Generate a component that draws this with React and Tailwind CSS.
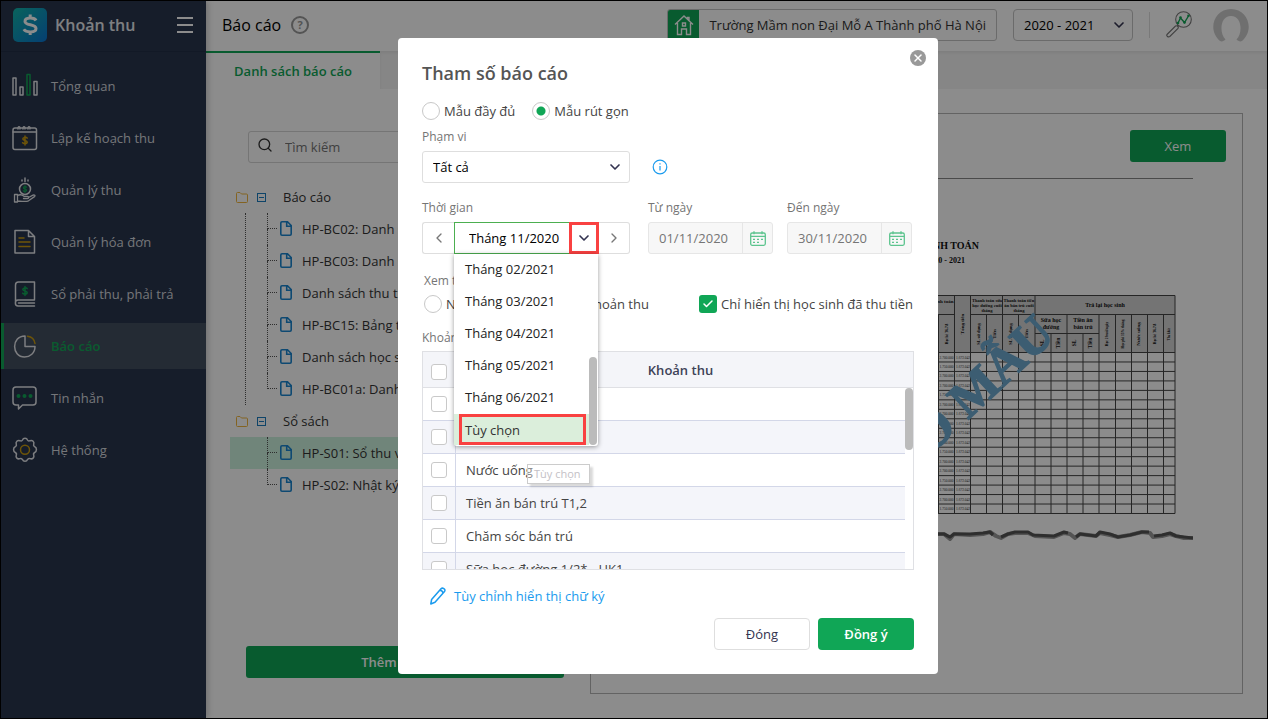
import React from "react";
import { ChevronDown, ChevronLeft, ChevronRight, Check, X, Search } from "lucide-react";

const stroke = { fill: "none", strokeWidth: 1.5, strokeLinecap: "round", strokeLinejoin: "round" };
const W = "#e4e6ea";
const G = "#12a656";
const Y = "#c79a10";

function Glyph({ children }) {
  return (
    <svg viewBox="0 0 26 26" className="size-[26px] shrink-0" {...stroke} stroke={W} aria-hidden="true">
      {children}
    </svg>
  );
}

const dollar = "M2.2-2.4C1.6-3.4-2.2-3.6-2.2-1.4C-2.2.4 2.2-.4 2.2 1.5C2.2 3.6-1.8 3.4-2.4 2.2M0-4.6V4.6";

const icons = {
  overview: (
    <>
      <rect x="1" y="5" width="3" height="17" />
      <rect x="8" y="14" width="3" height="8" />
      <rect x="15" y="1.5" width="3" height="20.5" stroke={G} />
      <rect x="22" y="8.5" width="3" height="13.5" />
    </>
  ),
  plan: (
    <>
      <rect x="1" y="3" width="23.5" height="21.5" rx="2" />
      <path d="M1 7h23.500M6 4.200c-.500-3.500 2.500-3.500 2-.200M11 4.200c-.500-3.500 2.500-3.500 2-.200M16 4.200c-.500-3.500 2.500-3.500 2-.200" strokeWidth="1.3" />
      <path d={dollar} transform="translate(13 15.5)" stroke={Y} />
    </>
  ),
  collect: (
    <>
      <circle cx="13" cy="12" r="5.5" />
      <path d={dollar} transform="translate(13 12) scale(.75)" stroke={G} />
      <path d="M10 4V3M13 4.500V1M16 4V3" />
      <path d="M2.500 17.500h3v7.500h-3zM5.500 18.500c3-1.500 5-.500 6.500.800h3.500c1.500 0 1.500 2.200 0 2.200h-4M16.500 20.500l4.500-2.300c1.500-.600 2.700.400 1.500 1.400l-6 4.200c-3 1.400-6 .200-11 .200" strokeWidth="1.3" />
    </>
  ),
  invoice: (
    <>
      <path d="M3 1.500h13.500l6 6v16.500h-19.500zM16.500 1.500v6h6" />
      <path d="M7 9h5M7 13h11M7 17.500h11" stroke={Y} />
    </>
  ),
  ledger: (
    <>
      <path d="M22.500 18.500v-17.500h-16c-2 0-3 1-3 3v18M22.500 19h-16.500c-3.500 0-3.500 6 0 6h16.500M6.500 22h16" />
      <path d={dollar} transform="translate(13 10)" stroke={G} />
    </>
  ),
  report: (
    <>
      <path d="M13 3C-1 3-.500 24 12.500 24C18 24 23 20 23 13.500H13z" />
      <path d="M15.500 3.200c4.500.600 7 3.500 7.500 7.300" stroke={Y} />
    </>
  ),
  message: (
    <>
      <path d="M4 2h17c2 0 3 1 3 3v12c0 2-1 3-3 3h-10.500l-4 4v-4h-2.500c-2 0-3-1-3-3v-12c0-2 1-3 3-3z" />
      <g fill={G} stroke="none">
        <circle cx="6.500" cy="11" r="2" />
        <circle cx="12.500" cy="11" r="2" />
        <circle cx="18.500" cy="11" r="2" />
      </g>
    </>
  ),
  system: (
    <>
      <path d="M10.500 3c.800-2.400 4.200-2.400 5 0c.500 1 1.500 1.200 2.500.700c2.500-1 4.600 1.100 3.700 3.500c-.400 1.100 0 2 1 2.500c2.300 1 2.300 4.800 0 5.800c-1 .500-1.400 1.500-1 2.500c.900 2.500-1.200 4.600-3.700 3.600c-1-.400-2 0-2.500 1c-.800 2.300-4.200 2.300-5 0c-.500-1-1.500-1.400-2.500-1c-2.500 1-4.600-1.100-3.700-3.600c.400-1 0-2-1-2.500c-2.300-1-2.300-4.800 0-5.800c1-.500 1.400-1.400 1-2.500c-.900-2.400 1.200-4.500 3.700-3.500c1 .500 2 .300 2.500-.700z" />
      <circle cx="13" cy="12.700" r="4.500" stroke={Y} />
    </>
  ),
};

const menu = [
  ["overview", "Tổng quan"],
  ["plan", "Lập kế hoạch thu"],
  ["collect", "Quản lý thu"],
  ["invoice", "Quản lý hóa đơn"],
  ["ledger", "Sổ phải thu, phải trả"],
  ["report", "Báo cáo"],
  ["message", "Tin nhắn"],
  ["system", "Hệ thống"],
];

function Sidebar() {
  return (
    <aside className="relative z-10 flex w-[205px] shrink-0 flex-col bg-[#28354e] shadow-[2px_0_6px_rgba(0,0,0,0.2)]">
      <div className="flex h-[51px] items-center border-b border-[#222e45] pr-[13px] pb-[3px] pl-3">
        <svg viewBox="0 0 34 34" className="size-[34px]" aria-hidden="true">
          <defs>
            <linearGradient id="brand" x1="0" y1="0" x2="1" y2="1">
              <stop offset="0" stopColor="#12b5a8" />
              <stop offset="1" stopColor="#0a74d0" />
            </linearGradient>
          </defs>
          <rect width="34" height="34" rx="5" fill="url(#brand)" />
          <path d="M23 12.500c-1.500-3.200-11-3.600-11 1c0 4.300 11 2.300 11 7c0 4.600-10 4.200-12.200.800M17.200 6.500v4M17.200 23v4" fill="none" stroke="#fff" strokeWidth="3" />
        </svg>
        <span className="ml-2 text-base font-semibold text-[#e6e8ec]">Khoản thu</span>
        <button type="button" aria-label="Menu" className="ml-auto flex w-4 flex-col gap-[5px]">
          <span className="h-[2px] w-full bg-white" />
          <span className="h-[2px] w-full bg-white" />
          <span className="h-[2px] w-full bg-white" />
        </button>
      </div>
      <nav className="mt-[11px] flex flex-col gap-[6px]">
        {menu.map(([key, label]) => (
          <a
            key={key}
            href="#"
            className={
              key === "report"
                ? "flex h-[46px] items-center gap-3 border-l-[3px] border-[#12a656] bg-[#434f60] pl-2 font-semibold text-[#12a656]"
                : "flex h-[46px] items-center gap-3 border-l-[3px] border-transparent pl-2 text-[#d6d8dc]"
            }
          >
            <Glyph>{icons[key]}</Glyph>
            <span className="pl-px">{label}</span>
          </a>
        ))}
      </nav>
    </aside>
  );
}

function Header() {
  return (
    <header className="relative z-[1] flex h-[50px] shrink-0 items-center bg-white pr-[18px] pb-[2px] pl-4 shadow-[0_2px_4px_rgba(0,0,0,0.08)]">
      <h1 className="text-base text-black">Báo cáo</h1>
      <button type="button" aria-label="Trợ giúp" className="ml-[10px] flex size-[18px] items-center justify-center rounded-full border-2 border-[#999] text-[11px] font-bold text-[#999]">
        ?
      </button>
      <div className="ml-auto flex h-8 items-center overflow-hidden rounded-[3px] border border-[#c4c4c4]">
        <span className="flex h-8 w-[31px] items-center justify-center bg-[#10a656]">
          <svg viewBox="0 0 20 22" className="h-[22px] w-5" fill="none" stroke="#fff" strokeWidth="1.400" aria-hidden="true">
            <path d="M1 10.500L10 2l9 8.500M3.500 9v11.500h4v-5.500h5v5.500h4V9M15 6.500V3.500h-1.500v1.700M8.500 9h3v3h-3z" />
          </svg>
        </span>
        <span className="px-[10px] text-[#333]">Trường Mầm non Đại Mỗ A Thành phố Hà Nội</span>
      </div>
      <div className="relative ml-4">
        <select aria-label="Năm học" className="h-8 w-[120px] appearance-none rounded-[4px] border border-[#c4c4c4] bg-white px-[10px] text-black">
          <option>2020 - 2021</option>
        </select>
        <ChevronDown strokeWidth={2.5} className="pointer-events-none absolute top-2 right-[6px] size-4 text-[#333350]" />
      </div>
      <span className="mx-4 h-[26px] w-px bg-[#ddd]" />
      <svg viewBox="0 0 26 27" className="h-[27px] w-[26px] -translate-y-px" fill="none" stroke="#777" strokeWidth="1.100" aria-hidden="true">
        <circle cx="17.500" cy="8.500" r="7.800" />
        <path d="M11.500 14l1.200 1.500M1 23.500l8.500-8.500c1.500-.800 3.500 1 2.500 2.500l-8.200 8c-1.600 1-3.800-.500-2.800-2z" />
        <path d="M12 12l2.500-5l4 4.500l4-6.500" stroke={G} strokeWidth="1.400" />
        <g fill={G} stroke="none"><circle cx="12" cy="12" r="1.300" /><circle cx="14.500" cy="6.500" r="1.300" /><circle cx="18.500" cy="11.500" r="1.300" /><circle cx="22.500" cy="4.800" r="1.300" /></g>
      </svg>
      <button type="button" aria-label="Tài khoản" className="ml-[21px]">
        <svg viewBox="0 0 36 33" className="h-[33px] w-9" aria-hidden="true">
          <path d="M7 32C-6 21 1 0 18 0S42 21 29 32C27 33 25 32 23.500 30.500C30 24 29 7 18 7S6 24 12.500 30.500C11 32 9 33 7 32z" fill="#cbcbcb" />
        </svg>
      </button>
    </header>
  );
}

const groups = [
  {
    name: "Báo cáo",
    items: [
      "HP-BC02: Danh sách học sinh",
      "HP-BC03: Danh sách đã thu",
      "Danh sách thu tiền",
      "HP-BC15: Bảng tổng hợp",
      "Danh sách học sinh",
      "HP-BC01a: Danh sách",
    ],
  },
  { name: "Sổ sách", items: ["HP-S01: Sổ thu và thanh toán", "HP-S02: Nhật ký thu"] },
];

function Tree() {
  return (
    <ul className="mt-[18px] ml-6 overflow-hidden">
      {groups.map((g, gi) => (
        <li key={g.name}>
          <div className="flex h-8 items-center pl-[6px] text-[#333]">
            <svg viewBox="0 0 12 11" className="h-[11px] w-3" fill="none" stroke="#eeb53f" aria-hidden="true">
              <path d="M.500 1.500q0-1 1-1h2.500l1.500 1.500h5q1 0 1 1v6.500q0 1-1 1h-9q-1 0-1-1z" />
            </svg>
            <button type="button" aria-label={"Thu gọn " + g.name} className="ml-[9px] flex size-[9px] items-center justify-center border border-[#1a7cc0]">
              <span className="h-px w-[5px] bg-[#1a7cc0]" />
            </button>
            <span className="ml-[17px]">{g.name}</span>
          </div>
          <ul className={gi === 0 ? "ml-[15px] border-l border-dotted border-[#555]" : ""}>
            {g.items.map((it, i) => (
              <li
                key={it}
                className={
                  it.startsWith("HP-S01")
                    ? "flex h-8 items-stretch bg-[#cdf2de] text-[#333]"
                    : "flex h-8 items-stretch text-[#333]"
                }
              >
                <span className={gi === 0 ? "w-[21px]" : "w-[37px]"} />
                <span className="flex w-[10px] flex-col">
                  <span className="h-4 border-b border-l border-dotted border-[#555]" />
                  {i < g.items.length - 1 && <span className="h-4 border-l border-dotted border-[#555]" />}
                </span>
                <svg viewBox="0 0 12 15" className="mt-2 ml-[3px] h-[15px] w-3 shrink-0" fill="none" stroke="#1a86cf" strokeWidth="1.600" aria-hidden="true">
                  <path d="M.800 2q0-1.200 1.200-1.200h5.500l3.700 3.700v8.500q0 1.200-1.200 1.200h-8q-1.200 0-1.200-1.200zM6.700 1v4.300h4.300" />
                </svg>
                <a href="#" className="ml-[10px] leading-8 whitespace-nowrap">{it}</a>
              </li>
            ))}
          </ul>
        </li>
      ))}
    </ul>
  );
}

const cols = [938.5, 954.5, 970.5, 986.5, 1002.5, 1018.5, 1035, 1051, 1067, 1083, 1099, 1115.5, 1131.5, 1147.5, 1163.5, 1175];
const rows = Array.from({ length: 18 }, (_, i) => 352.5 + i * 9.47);
const upright = [
  [947, 334, "Học hè T6,7,8", 3.5],
  [963, 324, "Tổng tiền", 5],
  [979, 334, "SL sử dụng", 4.5],
  [995, 334, "Tiền", 5],
  [1011, 334, "SL sử dụng", 4.5],
  [1027, 334, "Tiền", 5],
  [1043, 343, "SL", 5.5],
  [1059, 343, "Tiền", 5.5],
  [1075, 343, "SL", 5.5],
  [1091, 343, "Tiền", 5.5],
  [1107, 334, "Học 2 buổi/ngày", 3.5],
  [1123, 334, "Học phí 15% tháng", 3.5],
  [1139, 334, "Nước uống", 5],
  [1155, 334, "Học hè T6,7,8", 3.5],
  [1169, 334, "Thu khác", 3],
];

function SamplePage() {
  return (
    <svg viewBox="591 178 602 370" className="mt-4 w-full max-w-[602px]" role="img" aria-label="Mẫu báo cáo" fontFamily="'Liberation Serif', serif">
      <path d="M615 178.500H1193" stroke="#888" />
      <g fontWeight="bold" fill="#111">
        <text x="979" y="249" fontSize="10" textAnchor="end">BẢNG THANH TOÁN</text>
        <text x="965" y="263" fontSize="8" textAnchor="end">Năm học 2020 - 2021</text>
      </g>
      <rect x="615" y="295.500" width="560" height="57" fill="#d4d4d4" />
      <g stroke="#444" strokeWidth="1">
        <path d="M615 295.500H1175M615 314.500H954.500M970.500 314.500H1175M1035 333.500H1099" />
        {rows.map((y) => <path key={y} d={`M615 ${y}H1175`} />)}
        {cols.map((x, i) => (
          <path key={x} d={`M${x} ${[1, 2, 4, 6, 15].includes(i) ? 295.5 : i === 7 || i === 9 ? 333.5 : 314.5}V513.500`} />
        ))}
      </g>
      <g fontWeight="bold" fill="#111" textAnchor="middle">
        <text x="941" y="303" fontSize="5">Thanh toán</text>
        <text fontSize="4.500"><tspan x="987" y="302">Thanh toán sữa</tspan><tspan x="987" y="307">học đường cuối</tspan><tspan x="987" y="312">tháng</tspan></text>
        <text fontSize="4.500"><tspan x="1019" y="302">Thanh toán tiền</tspan><tspan x="1019" y="307">ăn bán trú cuối</tspan><tspan x="1019" y="312">tháng</tspan></text>
        <text x="1105" y="307" fontSize="6">Trả lại học sinh</text>
        <text fontSize="6"><tspan x="1051" y="322">Sữa học</tspan><tspan x="1051" y="329">đường</tspan></text>
        <text fontSize="6"><tspan x="1083" y="322">Tiền ăn</tspan><tspan x="1083" y="329">bán trú</tspan></text>
        {upright.map(([x, y, t, s]) => (
          <text key={x} fontSize={s} transform={`translate(${x + 1} ${y}) rotate(-90)`}>{t}</text>
        ))}
      </g>
      <g fill="#333" fontSize="3.500" textAnchor="middle">
        {rows.slice(0, 17).map((y, i) => (
          <g key={y}>
            <text x="946.500" y={y + 6}>{i % 3 === 1 ? "1.750.000" : "2.700.000"}</text>
            <text x="963" y={y + 6}>1.672.042</text>
          </g>
        ))}
      </g>
      <text transform="translate(1057 337) rotate(-43)" fontSize="51" fontWeight="bold" fill="#6eaad0" stroke="#6eaad0" strokeWidth="1.500" textAnchor="end">BÁO CÁO MẪU</text>
      <g fill="none" strokeLinejoin="round">
        <path d="M615 536L700 533L800 537L938 534L944 534L950 539L954 534L970 535L983 534L990 532L996 536L1001 538L1008 534L1015 533L1028 533L1035 536L1054 537L1064 533L1070 534L1075 538L1080 534L1096 536L1100 533L1110 535L1118 537L1130 535L1142 532L1150 533L1153 537L1162 536L1170 534L1176 536L1184 538L1193 538" stroke="#999" strokeWidth="4" />
        <path d="M938 534L944 534L950 537L954 534L970 534L983 533L990 532L993 535M1001 537L1008 534L1015 532L1028 532L1033 535L1054 536L1064 532L1068 533M1076 537L1080 534L1096 536L1100 532L1110 534L1118 537L1130 535L1142 532L1149 532M1154 536L1162 535L1170 533L1176 536L1184 537L1193 538" stroke="#555" strokeWidth="3.200" />
      </g>
    </svg>
  );
}

const radioCls =
  "size-[18px] shrink-0 appearance-none rounded-full border border-[#c8c8c8] bg-white checked:bg-[radial-gradient(circle,#10a656_4px,transparent_5px)]";
const boxCls = "block size-4 appearance-none rounded-[3px] border border-[#c9c9c9] bg-white";
const labelCls = "block text-xs leading-[18px] text-[#757575]";

function DateField({ id, label, value }) {
  return (
    <div className="w-[125px]">
      <label htmlFor={id} className={labelCls}>{label}</label>
      <div className="mt-[5px] flex h-8 rounded-[3px] border border-[#e6e6e6] bg-[#f7f7f7]">
        <input id={id} defaultValue={value} disabled className="w-0 flex-1 bg-transparent pl-[10px] text-[#757575]" />
        <button type="button" aria-label={"Chọn " + label} className="flex w-[30px] items-center justify-center border-l border-[#e6e6e6]">
          <svg viewBox="0 0 16 15" className="h-[15px] w-4" fill="none" stroke="#5cc48e" strokeWidth="1.300" aria-hidden="true">
            <rect x=".7" y="2" width="14.600" height="12.300" rx="1.500" />
            <path d="M.700 5.300h14.600M4 .300v3M12 .300v3M3 8.300h2M7 8.300h2M11 8.300h2M3 11.300h2M7 11.300h2" />
          </svg>
        </button>
      </div>
    </div>
  );
}

const months = ["Tháng 02/2021", "Tháng 03/2021", "Tháng 04/2021", "Tháng 05/2021", "Tháng 06/2021"];

function PeriodPicker() {
  return (
    <div className="w-[208px]">
      <label htmlFor="period" className={labelCls}>Thời gian</label>
      <div className="relative mt-[5px] flex h-8">
        <button type="button" aria-label="Kỳ trước" className="flex w-8 items-center justify-center rounded-l-[3px] border border-r-0 border-[#dedede] text-[#777]">
          <ChevronLeft className="size-4" />
        </button>
        <input id="period" readOnly defaultValue="Tháng 11/2020" className="w-0 flex-1 border border-r-0 border-[#4caf50] pl-[14px] text-black outline-none" />
        <button type="button" aria-label="Mở danh sách" className="flex w-[30px] items-center justify-center border-[3px] border-[#f94141] text-[#333350]">
          <ChevronDown strokeWidth={2.5} className="size-4 shrink-0" />
        </button>
        <button type="button" aria-label="Kỳ sau" className="flex w-[31px] items-center justify-center rounded-r-[3px] border border-l-0 border-[#dedede] text-[#777]">
          <ChevronRight className="size-4" />
        </button>
        <div className="absolute top-8 left-8 z-10 w-36 rounded-b-[3px] bg-white shadow-[0_1px_5px_rgba(0,0,0,0.4)]">
          <ul role="listbox" aria-label="Thời gian" className="pb-px">
            {months.map((m) => (
              <li key={m} role="option" aria-selected="false" className="h-8 pl-[11px] leading-[31px] text-[#222]">{m}</li>
            ))}
            <li role="option" aria-selected="true" className="mr-[9px] h-[31px] bg-[#dbeedb] pr-[3px] pl-[5px]">
              <span className="flex h-[31px] items-center border-[3px] border-[#f94141] pl-[3px] text-[#333]">Tùy chọn</span>
            </li>
          </ul>
          <span className="absolute right-px bottom-px h-[88px] w-2 rounded-full bg-[#bbb]" />
          <span role="tooltip" className="absolute top-[210px] left-[73px] h-5 w-[63px] border border-[#ccc] bg-white/40 pl-[6px] text-[11px] leading-[18px] whitespace-nowrap text-[#c4c1c6] shadow-[3px_3px_2px_rgba(0,0,0,0.15)]">Tùy chọn</span>
        </div>
      </div>
    </div>
  );
}

const fees = ["Học phí", "Tiền ăn", "Nước uống", "Tiền ăn bán trú T1,2", "Chăm sóc bán trú", "Sữa học đường 1/2* - HK1"];

function FeeTable() {
  return (
    <div className="relative mt-1 h-[219px] overflow-hidden border border-[#dfe0e4]">
      <table aria-label="Khoản thu" className="w-full table-fixed border-separate border-spacing-0">
        <thead>
          <tr className="h-9 bg-[#f4f5f9]">
            <th className="w-[33px] border-b border-[#dfe0e4] pt-1 pl-2"><input type="checkbox" aria-label="Chọn tất cả" className={boxCls} /></th>
            <th className="border-b border-[#dfe0e4] text-center font-semibold text-[#3d4257]">Khoản thu</th>
            <th className="w-2 border-b border-[#dfe0e4]" />
          </tr>
        </thead>
        <tbody>
          {fees.map((f, i) => (
            <tr key={f} className="h-[33px]">
              <td className={i % 2 ? "border-r border-b border-[#d3d7e8] bg-[#f4f5fa] pl-2" : "border-r border-b border-[#d3d7e8] pl-2"}>
                <input id={"fee" + i} type="checkbox" className={boxCls} />
              </td>
              <td className={i % 2 ? "border-b border-[#d3d7e8] bg-[#f4f5fa] pl-[10px] text-[#444]" : "border-b border-[#d3d7e8] pl-[10px] text-[#444]"}>
                <label htmlFor={"fee" + i}>{f}</label>
              </td>
              <td />
            </tr>
          ))}
        </tbody>
      </table>
      <span className="absolute top-9 right-0 h-[62px] w-2 rounded-full bg-[#bbb]" />
    </div>
  );
}

function Dialog() {
  return (
    <div role="dialog" aria-modal="true" aria-labelledby="dlg" className="relative w-[540px] rounded-[4px] bg-white px-6 pt-5 pb-6 text-[#444]">
      <button type="button" aria-label="Đóng hộp thoại" className="absolute top-3 right-3 flex size-4 items-center justify-center rounded-full bg-[#999] text-white">
        <X className="size-3" strokeWidth={3} />
      </button>
      <h2 id="dlg" className="text-lg leading-[30px] font-semibold text-[#555]">Tham số báo cáo</h2>
      <div className="mt-[14px] flex h-[18px] items-center gap-[17px]">
        <label className="flex items-center gap-1"><input type="radio" name="form" className={radioCls} />Mẫu đầy đủ</label>
        <label className="flex items-center gap-1"><input type="radio" name="form" defaultChecked className={radioCls} />Mẫu rút gọn</label>
      </div>
      <div className="mt-2">
        <label htmlFor="scope" className={labelCls}>Phạm vi</label>
        <div className="mt-[5px] flex items-center">
          <div className="relative w-[208px]">
            <select id="scope" className="h-8 w-full appearance-none rounded-[3px] border border-[#dedede] bg-white px-[10px] text-black">
              <option>Tất cả</option>
            </select>
            <ChevronDown strokeWidth={2.5} className="pointer-events-none absolute top-2 right-[7px] size-4 text-[#333350]" />
          </div>
          <svg viewBox="0 0 16 16" className="ml-[22px] size-4" role="img" aria-label="Thông tin">
            <circle cx="8" cy="8" r="6.800" fill="none" stroke="#1a9bee" strokeWidth="1.200" />
            <path d="M8 7v4.500M8 4.300v1.300" stroke="#1a9bee" strokeWidth="1.200" />
          </svg>
        </div>
      </div>
      <div className="mt-4 flex">
        <PeriodPicker />
        <div className="ml-[18px] flex gap-[14px]">
          <DateField id="from" label="Từ ngày" value="01/11/2020" />
          <DateField id="to" label="Đến ngày" value="30/11/2020" />
        </div>
      </div>
      <div className="mt-[18px] pl-[2px]">
        <span className={labelCls}>Xem theo</span>
        <div className="mt-[5px] flex h-[18px] items-center">
          <label className="flex w-[140px] items-center gap-1"><input type="radio" name="by" className={radioCls} />Nhóm thu</label>
          <label className="flex items-center gap-1"><input type="radio" name="by" className={radioCls} />Khoản thu</label>
          <label className="mr-px ml-auto flex items-center gap-1">
            <span className="relative block size-[18px]">
              <input type="checkbox" defaultChecked className="block size-[18px] appearance-none rounded-[3px] bg-[#10a656]" />
              <Check className="pointer-events-none absolute top-[3px] left-[3px] size-3 text-white" strokeWidth={3} />
            </span>
            Chỉ hiển thị học sinh đã thu tiền
          </label>
        </div>
      </div>
      <div className="mt-4">
        <span className={labelCls}>Khoản thu</span>
        <FeeTable />
      </div>
      <a href="#" className="mt-[17px] flex h-[18px] items-center gap-2 pl-2 text-[#1a9bee]">
        <svg viewBox="0 0 16 18" className="h-[18px] w-4" fill="none" stroke="#1a9bee" strokeWidth="1.500" strokeLinejoin="round" aria-hidden="true">
          <path d="M.800 17l.800-4.500L11 1.800q1.200-1.200 2.800-.200q1.900 1.300.700 3L5 15.300zM10 3.200q2.500.300 3.200 3" />
        </svg>
        Tùy chỉnh hiển thị chữ ký
      </a>
      <div className="mt-[13px] flex justify-end gap-2">
        <button type="button" className="h-8 w-24 rounded-[4px] border border-[#dedede] text-[#333350]">Đóng</button>
        <button type="button" className="h-8 w-24 rounded-[4px] bg-[#10a656] font-semibold text-white">Đồng ý</button>
      </div>
    </div>
  );
}

export default function App() {
  return (
    <div className="relative flex min-h-screen border border-black bg-white font-['Open_Sans','Noto_Sans',sans-serif] text-[13px] leading-5">
      <Sidebar />
      <main className="flex min-w-0 flex-1 flex-col">
        <Header />
        <div className="relative z-[2] flex h-[38px] shrink-0">
          <a href="#" className="w-[174px] border-t-2 border-[#10a656] bg-white text-center leading-[37px] font-semibold text-[#10a656]">Danh sách báo cáo</a>
          <span className="flex-1 bg-[#f4f4f4] shadow-[inset_0_2px_3px_rgba(0,0,0,0.06)]" />
        </div>
        <div className="flex flex-1">
          <section className="flex w-[384px] shrink-0 flex-col pt-[42px] pb-10">
            <div className="mr-[26px] ml-[42px] flex h-8 items-center rounded-[3px] border border-[#d5d5d5] pl-2">
              <Search className="mb-1 size-4 text-[#333]" />
              <input aria-label="Tìm kiếm" placeholder="Tìm kiếm" className="ml-3 w-0 flex-1 outline-none placeholder:text-[#757575]" />
            </div>
            <Tree />
            <button type="button" className="mt-auto mr-[26px] ml-10 h-8 rounded-[3px] bg-[#10a656] font-semibold text-white">Thêm báo cáo</button>
          </section>
          <section className="mt-6 mr-6 mb-6 flex min-w-0 flex-1 flex-col border border-[#b5b5b5]">
            <button type="button" className="mt-4 mr-4 h-8 w-24 self-end rounded-[3px] bg-[#10a656] font-medium text-white">Xem</button>
            <SamplePage />
          </section>
        </div>
      </main>
      <div className="absolute inset-0 z-20 flex items-start justify-center bg-black/45 pt-[37px] pl-[68px]">
        <Dialog />
      </div>
    </div>
  );
}
